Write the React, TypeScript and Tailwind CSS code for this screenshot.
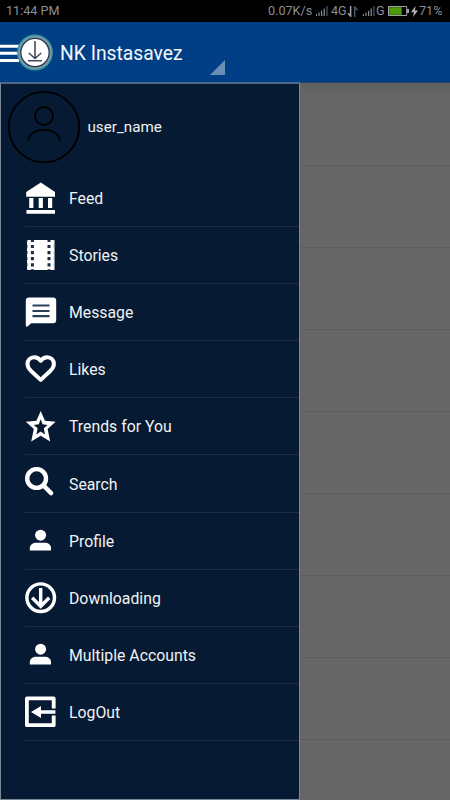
import type { ReactNode } from 'react';

const Person = () => (
  <g fill="#fff">
    <circle cx="15.6" cy="10.2" r="5.5" />
    <path d="M4.8 25.5v-2.4c0-3.4 3-5.4 7-5.4h7.6c4 0 6.6 2 6.6 5.4v2.4z" />
  </g>
);

const items: { label: string; icon: ReactNode }[] = [
  {
    label: 'Feed',
    icon: <path fill="#fff" d="M15.8.6 30 10v4.8H1.2V10zM4.2 16h4.2v10H4.2zM13.7 16h4.2v10h-4.2zM23 16h4.2v10H23zM1.5 28H30v3.8H1.5z" />,
  },
  {
    label: 'Stories',
    icon: (
      <>
        <path fill="#fff" d="M2 1h27.5v30H2z" />
        <path
          stroke="#1a2d45"
          strokeWidth="3"
          strokeDasharray="3.2 2.9"
          strokeDashoffset="1.2"
          d="M7.4 1v30M24 1v30"
        />
        <path stroke="#8391a1" strokeWidth="1" strokeDasharray="3 3.1" strokeDashoffset="1.2" d="M2.4 1v30M29.2 1v30" />
      </>
    ),
  },
  {
    label: 'Message',
    icon: (
      <>
        <path fill="#fff" d="M4 1.5h24q3.2 0 3.2 3V24q0 3.2-3.2 3.2H6.2L2.5 30.6Q.8 31 .8 29V4.5q0-3 3.2-3z" />
        <path stroke="#28405a" strokeWidth="2.2" d="M7.5 9.5h17M7.5 15h17M7.5 20.2h17" />
      </>
    ),
  },
  {
    label: 'Likes',
    icon: (
      <path
        fill="none"
        stroke="#fff"
        strokeWidth="4"
        strokeLinejoin="round"
        d="M15.7 7.7C13.7 5 11.5 4.2 9.3 4.2 5.3 4.2 2.5 7.2 2.5 11c0 2.6 1.2 4.6 3.3 6.7l9.9 9.2 9.8-9.2c2.1-2.1 3.4-4.1 3.4-6.7 0-3.8-2.8-6.8-6.7-6.8-2.3 0-4.5.8-6.5 3.5z"
      />
    ),
  },
  {
    label: 'Trends for You',
    icon: (
      <path
        fill="#fff"
        fillRule="evenodd"
        d="M15.7.9l4.3 9.9 10.6 1-8 7.1 2.6 12.5-9.5-5.6-9.5 5.6 2.6-12.5-8-7.1 10.6-1zM15.7 9.3l-1.9 5-5 .6 3.8 3.3-1.2 6.3 4.3-3 4.3 3-1.2-6.3 3.8-3.3-5-.6z"
      />
    ),
  },
  {
    label: 'Search',
    icon: (
      <g fill="none" stroke="#fff" strokeWidth="4.4" strokeLinecap="round">
        <circle cx="11.6" cy="11.5" r="9.4" />
        <path d="m18.7 18.7 7.4 7.4" />
      </g>
    ),
  },
  { label: 'Profile', icon: <Person /> },
  {
    label: 'Downloading',
    icon: (
      <g fill="none" stroke="#fff" strokeWidth="3.4">
        <circle cx="15.7" cy="15.7" r="13.8" />
        <path d="M15.7 6v19M7.2 15.7l8.5 8.6 8.5-8.6" />
      </g>
    ),
  },
  { label: 'Multiple Accounts', icon: <Person /> },
  {
    label: 'LogOut',
    icon: (
      <>
        <path
          fill="none"
          stroke="#fff"
          strokeWidth="3.8"
          strokeLinejoin="round"
          d="M28.7 12.4V2.4H1.9v26.8h26.8V19.5"
        />
        <path fill="#fff" d="M6 15.9l10-6v4.4h14.4v3.4H16V22z" />
      </>
    ),
  },
];

const Signal = () => (
  <svg className="h-[10px] w-[12px] shrink-0" viewBox="0 0 12 10" fill="#8b9098">
    <path d="M0 8h1v2H0zM2.4 6.5h1.2V10H2.4zM5 4.8h1.2V10H5zM7.6 2.5h1.2V10H7.6z" />
    <path fill="#515a66" d="M10.4 0h1.2v10h-1.2z" />
  </svg>
);

function StatusBar() {
  return (
    <div className="flex h-[22px] shrink-0 items-center justify-between bg-black pr-[7px] pl-[6px] text-[12.6px] text-[#898e95]">
      <span className="pt-[1px]">11:44 PM</span>
      <div className="flex items-center pt-[1px]">
        <span className="w-[44px] whitespace-nowrap">0.07K/s</span>
        <span className="ml-[4px] flex">
          <Signal />
        </span>
        <span className="ml-[3px] w-[16px] whitespace-nowrap">4G</span>
        <svg className="h-[11px] w-[12px]" viewBox="0 0 12 11" fill="none" strokeWidth="1.5">
          <path stroke="#a2a7ae" d="M3.6 0v10L1 7.2" />
          <path stroke="#465569" d="M7.7 11V1.2l3 3" />
        </svg>
        <span className="ml-[4px] flex">
          <Signal />
        </span>
        <span className="ml-[1px] w-[9px]">G</span>
        <svg className="ml-[3px] h-[10px] w-[21px]" viewBox="0 0 21 10">
          <path fill="none" stroke="#a2a5a8" d="M.5.5h18.2v9H.5z" />
          <path fill="#4d9c08" d="M1.2 1.2h12.5v7.6H1.2z" />
          <path fill="#a2a5a8" d="M19 3h2v4h-2z" />
        </svg>
        <svg className="ml-[2px] h-[11px] w-[7px]" viewBox="0 0 7 11" fill="#b0b4b9">
          <path d="M4.5 0 0 6.2h3L2 11l5-6.5H4z" />
        </svg>
        <span className="ml-[1px] w-[24px] whitespace-nowrap">71%</span>
      </div>
    </div>
  );
}

function Header() {
  return (
    <header className="flex h-[60px] shrink-0 items-center bg-[#003e86]">
      <svg className="h-[60px] w-[54px] shrink-0" viewBox="0 0 54 60" fill="none">
        <path stroke="#fff" strokeWidth="3" d="M0 24.3h19M0 31.3h19M0 38.4h19" />
        <circle cx="35" cy="30.5" r="17.2" fill="#8297a9" stroke="#329a9c" strokeWidth="1.4" />
        <circle cx="35" cy="30.5" r="14.2" fill="#fff" stroke="#253650" strokeWidth="1.3" />
        <path stroke="#424b57" strokeWidth="1.6" d="M35 19v16.5M28.8 31l6.2 5.5 6.2-5.5M28 38.7h14" />
      </svg>
      <h1 className="ml-[6px] w-[122px] pt-[3px] text-[19.3px] leading-6 whitespace-nowrap text-[#f4f7fa]">NK Instasavez</h1>
      <svg className="mt-[31px] ml-[28px] h-[15px] w-[15px]" viewBox="0 0 15 15" fill="#6b8fb4">
        <path d="M15 0v15H0z" />
      </svg>
    </header>
  );
}

function Drawer() {
  return (
    <nav className="flex w-[300px] shrink-0 flex-col border border-t-2 border-[#7d8793] border-t-[#4c6685] bg-[#061a33] text-[#f0f2f4]">
      <div className="flex h-[85.85px] shrink-0 items-center pl-[6px]">
        <svg className="h-[74px] w-[74px]" viewBox="0 0 74 74" fill="none" stroke="#000" strokeWidth="1.8">
          <circle cx="37" cy="37" r="35.2" />
          <circle cx="37" cy="26" r="9" />
          <path d="M21.5 50.5C22 43.5 29 39.9 37 39.9s15.3 3.6 16 10.6" />
        </svg>
        <span className="ml-[6.5px] pt-[1px] text-[15.2px]">user_name</span>
      </div>
      {items.map(({ label, icon }) => (
        <div key={label} className="ml-[24px] flex h-[57.12px] shrink-0 items-center border-b border-[#1c2e46]">
          <svg className="h-8 w-8 shrink-0" viewBox="0 0 32 32">
            {icon}
          </svg>
          <span className="ml-[12px] pt-[2px] text-[15.8px] whitespace-nowrap">{label}</span>
        </div>
      ))}
    </nav>
  );
}

export default function App() {
  return (
    <div className="flex h-[800px] w-[450px] flex-col overflow-hidden bg-[#666] font-['Roboto','Liberation_Sans',sans-serif]">
      <StatusBar />
      <Header />
      <main className="flex min-h-0 flex-1">
        <Drawer />
        <div className="flex-1 overflow-hidden border-t border-[#294765] bg-gradient-to-b from-[#606060] to-[#666] to-[12px]">
          <div className="h-[83px] border-b border-[#5d5d5d]" />
          {[1, 2, 3, 4, 5, 6, 7].map((row) => (
            <div key={row} className="h-[82px] border-b border-[#5d5d5d]" />
          ))}
        </div>
      </main>
    </div>
  );
}
